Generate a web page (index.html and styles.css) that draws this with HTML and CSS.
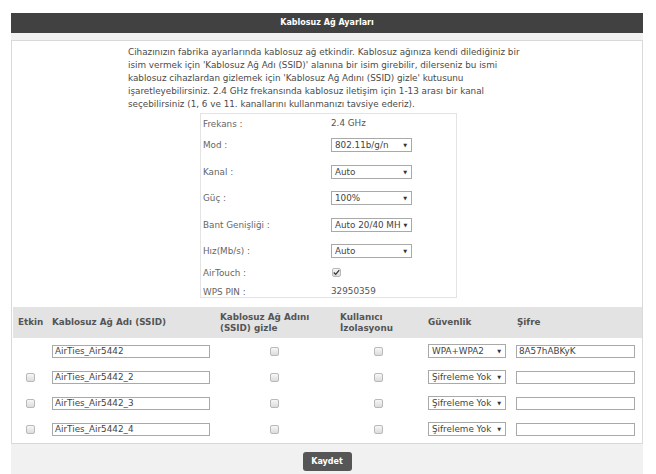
FILE: index.html
```html
<!DOCTYPE html>
<html lang="tr">
<head>
    <meta charset="UTF-8">
    <title>Kablosuz Ağ Ayarları</title>
    <link rel="stylesheet" href="styles.css">
</head>
<body>

<div class="panel">
    <h1 class="panel-title">Kablosuz Ağ Ayarları</h1>

    <div class="content">
        <p class="intro">
            Cihazınızın fabrika ayarlarında kablosuz ağ etkindir. Kablosuz ağınıza kendi dilediğiniz bir<br>
            isim vermek için 'Kablosuz Ağ Adı (SSID)' alanına bir isim girebilir, dilerseniz bu ismi<br>
            kablosuz cihazlardan gizlemek için 'Kablosuz Ağ Adını (SSID) gizle' kutusunu<br>
            işaretleyebilirsiniz. 2.4 GHz frekansında kablosuz iletişim için 1-13 arası bir kanal<br>
            seçebilirsiniz (1, 6 ve 11. kanallarını kullanmanızı tavsiye ederiz).
        </p>

        <div class="settings">
            <div class="lbl">Frekans :</div>
            <div class="val">2.4 GHz</div>

            <div class="lbl">Mod :</div>
            <div class="val"><span class="select">802.11b/g/n<i>▼</i></span></div>

            <div class="lbl">Kanal :</div>
            <div class="val"><span class="select">Auto<i>▼</i></span></div>

            <div class="lbl">Güç :</div>
            <div class="val"><span class="select">100%<i>▼</i></span></div>

            <div class="lbl">Bant Genişliği :</div>
            <div class="val"><span class="select">Auto 20/40 MH<i>▼</i></span></div>

            <div class="lbl">Hız(Mb/s) :</div>
            <div class="val"><span class="select">Auto<i>▼</i></span></div>

            <div class="lbl">AirTouch :</div>
            <div class="val"><span class="cb checked"><svg viewBox="0 0 9 9" width="7" height="7"><path d="M1 4.5 L3.5 7 L8 1.5" fill="none" stroke="#333" stroke-width="1.6"/></svg></span></div>

            <div class="lbl">WPS PIN :</div>
            <div class="val">32950359</div>
        </div>

        <table class="ssid-table">
            <thead>
                <tr>
                    <th class="col-on">Etkin</th>
                    <th class="col-name">Kablosuz Ağ Adı (SSID)</th>
                    <th class="col-hide">Kablosuz Ağ Adını<br>(SSID) gizle</th>
                    <th class="col-iso">Kullanıcı<br>İzolasyonu</th>
                    <th class="col-sec">Güvenlik</th>
                    <th class="col-key">Şifre</th>
                </tr>
            </thead>
            <tbody>
                <tr>
                    <td class="center"></td>
                    <td><span class="field name">AirTies_Air5442</span></td>
                    <td class="center"><span class="cb"></span></td>
                    <td class="center"><span class="cb"></span></td>
                    <td><span class="select sec">WPA+WPA2<i>▼</i></span></td>
                    <td><span class="field key">8A57hABKyK</span></td>
                </tr>
                <tr>
                    <td class="center"><span class="cb"></span></td>
                    <td><span class="field name">AirTies_Air5442_2</span></td>
                    <td class="center"><span class="cb"></span></td>
                    <td class="center"><span class="cb"></span></td>
                    <td><span class="select sec">Şifreleme Yok<i>▼</i></span></td>
                    <td><span class="field key"></span></td>
                </tr>
                <tr>
                    <td class="center"><span class="cb"></span></td>
                    <td><span class="field name">AirTies_Air5442_3</span></td>
                    <td class="center"><span class="cb"></span></td>
                    <td class="center"><span class="cb"></span></td>
                    <td><span class="select sec">Şifreleme Yok<i>▼</i></span></td>
                    <td><span class="field key"></span></td>
                </tr>
                <tr>
                    <td class="center"><span class="cb"></span></td>
                    <td><span class="field name">AirTies_Air5442_4</span></td>
                    <td class="center"><span class="cb"></span></td>
                    <td class="center"><span class="cb"></span></td>
                    <td><span class="select sec">Şifreleme Yok<i>▼</i></span></td>
                    <td><span class="field key"></span></td>
                </tr>
            </tbody>
        </table>
    </div>

    <div class="actions">
        <button class="save">Kaydet</button>
    </div>
</div>

</body>
</html>
```

FILE: styles.css
```css
body {
    margin: 0;
    background-color: #fff;
    color: #555;
    font-family: "DejaVu Sans", Verdana, sans-serif;
    font-size: 8.8px;
}
.panel {
    margin: 13px 13px 0 11px;
    background-color: #f1f1f1;
}
.panel-title {
    margin: 0;
    height: 20px;
    line-height: 20px;
    background-color: #414141;
    color: #fff;
    font-size: 8px;
    font-weight: bold;
    text-align: center;
}
.content {
    margin-top: 7px;
    height: 402px;
    background-color: #fff;
    border: 1px solid #d9d9d9;
}
.intro {
    margin: 5px 0 0 116px;
    line-height: 13px;
    font-size: 8.8px;
    color: #4a4a4a;
}
.settings {
    margin: 2px 0 0 188px;
    width: 255px;
    border: 1px solid #e3e3e3;
    display: grid;
    grid-template-columns: 130px 1fr;
    grid-template-rows: 21px 27px 26px 27px 26px 22px 19px 15px;
    color: #666;
}
.lbl {
    padding: 4px 0 0 2px;
    line-height: 13px;
}
.val {
    padding-top: 3px;
    line-height: 13px;
    color: #555;
}
.select {
    box-sizing: border-box;
    display: inline-flex;
    justify-content: space-between;
    align-items: center;
    width: 81px;
    height: 14px;
    padding: 0 4px 0 3px;
    border: 1px solid #a9a9a9;
    background-color: #fff;
    color: #444;
    white-space: nowrap;
    overflow: hidden;
    vertical-align: middle;
}
.select i {
    font-style: normal;
    font-size: 5px;
    color: #333;
    margin-left: 3px;
}
.select.sec {
    width: 78px;
}
.cb {
    box-sizing: border-box;
    display: inline-flex;
    align-items: center;
    justify-content: center;
    width: 9px;
    height: 9px;
    border: 1px solid #b9b9b9;
    border-radius: 2px;
    background: linear-gradient(#f7f7f7, #dcdcdc);
    vertical-align: middle;
}
.cb.checked {
    margin-left: 1px;
}
.ssid-table {
    margin: 9px 0 0 1px;
    width: 629px;
    border-collapse: collapse;
    table-layout: fixed;
}
.ssid-table th,
.ssid-table td {
    box-sizing: border-box;
}
.ssid-table th {
    height: 31px;
    padding: 0 0 0 5px;
    background-color: #e3e3e3;
    color: #555;
    font-weight: bold;
    text-align: left;
    line-height: 11px;
}
.ssid-table td {
    height: 26px;
    padding: 0 0 0 5px;
}
.ssid-table td.center {
    padding: 0;
    text-align: center;
}
.col-on { width: 35px; }
.col-name { width: 167px; }
.ssid-table th.col-name { padding-left: 4px; }
.col-hide { width: 118px; }
.col-iso { width: 90px; }
.ssid-table th.col-iso { padding-left: 7px; }
.col-sec { width: 89px; }
.ssid-table td:nth-child(2) { padding-left: 4px; }
.ssid-table td:nth-child(6) { padding-left: 4px; }
.field {
    box-sizing: border-box;
    display: inline-block;
    height: 13px;
    line-height: 11px;
    padding: 0 2px;
    border: 1px solid #a9a9a9;
    background-color: #fff;
    color: #444;
    vertical-align: middle;
}
.field.name { width: 158px; }
.field.key { width: 119px; }
.actions {
    height: 30px;
    display: flex;
    justify-content: center;
    align-items: flex-start;
}
.save {
    margin-top: 8px;
    width: 49px;
    height: 19px;
    padding: 0;
    border: none;
    border-radius: 3px;
    background-color: #565656;
    color: #fff;
    font-family: "DejaVu Sans", Verdana, sans-serif;
    font-size: 8px;
    font-weight: bold;
    cursor: pointer;
}
```
